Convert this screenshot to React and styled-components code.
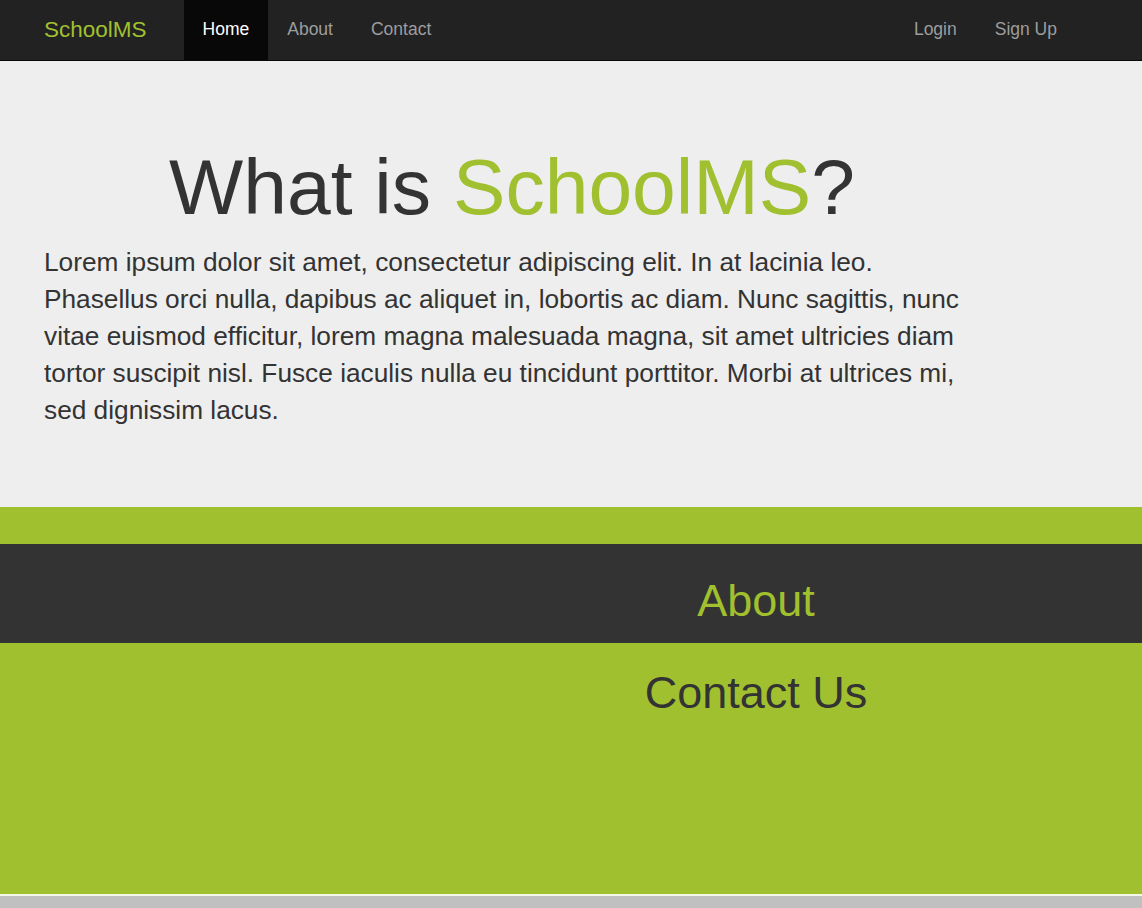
import React from 'react';
import styled, { createGlobalStyle } from 'styled-components';

const GlobalStyle = createGlobalStyle`
  html, body {
    margin: 0;
    padding: 0;
    background: #c0c0c0;
    font-family: "Liberation Sans", Arial, sans-serif;
    color: #333;
  }
  * { box-sizing: border-box; }
`;

const green = '#a0c030';

const Navbar = styled.nav`
  display: flex;
  align-items: stretch;
  justify-content: space-between;
  height: 61px;
  padding: 0 66px 0 44px;
  background: #222;
  border-bottom: 1px solid #080808;
`;

const NavGroup = styled.div`
  display: flex;
  align-items: stretch;
`;

const Brand = styled.a`
  display: flex;
  align-items: center;
  margin-right: 37px;
  font-size: 22.5px;
  color: ${green};
  text-decoration: none;
`;

const NavLink = styled.a`
  display: flex;
  align-items: center;
  padding: 0 19px 2px;
  font-size: 17.5px;
  text-decoration: none;
  color: ${({ active }) => (active ? '#fff' : '#9d9d9d')};
  background: ${({ active }) => (active ? '#080808' : 'transparent')};
`;

const Hero = styled.section`
  background: #eee;
  padding: 82px 44px 78px;
`;

const HeroContent = styled.div`
  width: 936px;
`;

const Title = styled.h1`
  margin: 0 0 13px;
  font-size: 78.6px;
  line-height: 88px;
  font-weight: normal;
  text-align: center;
  color: #333;
`;

const Accent = styled.span`
  color: ${green};
`;

const Lead = styled.p`
  margin: 0;
  font-size: 26.25px;
  line-height: 37px;
  color: #333;
`;

const Stripe = styled.div`
  height: 37px;
  background: ${green};
`;

const Band = styled.section`
  background: ${({ dark }) => (dark ? '#333' : green)};
  padding: ${({ dark }) => (dark ? '30px 0 15px 370px' : '23px 0 174px 370px')};
`;

const BandTitle = styled.h2`
  margin: 0;
  font-size: 45px;
  line-height: 54px;
  font-weight: normal;
  text-align: center;
  color: ${({ dark }) => (dark ? green : '#333')};
`;

const Footer = styled.div`
  height: 16px;
  border-top: 2px solid #f4f8e8;
  background: #c0c0c0;
`;

export default function App() {
  return (
    <>
      <GlobalStyle />
      <Navbar>
        <NavGroup>
          <Brand href="#">SchoolMS</Brand>
          <NavLink active href="#">Home</NavLink>
          <NavLink href="#">About</NavLink>
          <NavLink href="#">Contact</NavLink>
        </NavGroup>
        <NavGroup>
          <NavLink href="#">Login</NavLink>
          <NavLink href="#">Sign Up</NavLink>
        </NavGroup>
      </Navbar>
      <Hero>
        <HeroContent>
          <Title>
            What is <Accent>SchoolMS</Accent>?
          </Title>
          <Lead>
            Lorem ipsum dolor sit amet, consectetur adipiscing elit. In at lacinia leo.
            Phasellus orci nulla, dapibus ac aliquet in, lobortis ac diam. Nunc sagittis, nunc
            vitae euismod efficitur, lorem magna malesuada magna, sit amet ultricies diam
            tortor suscipit nisl. Fusce iaculis nulla eu tincidunt porttitor. Morbi at ultrices mi,
            sed dignissim lacus.
          </Lead>
        </HeroContent>
      </Hero>
      <Stripe />
      <Band dark>
        <BandTitle dark>About</BandTitle>
      </Band>
      <Band>
        <BandTitle>Contact Us</BandTitle>
      </Band>
      <Footer />
    </>
  );
}
